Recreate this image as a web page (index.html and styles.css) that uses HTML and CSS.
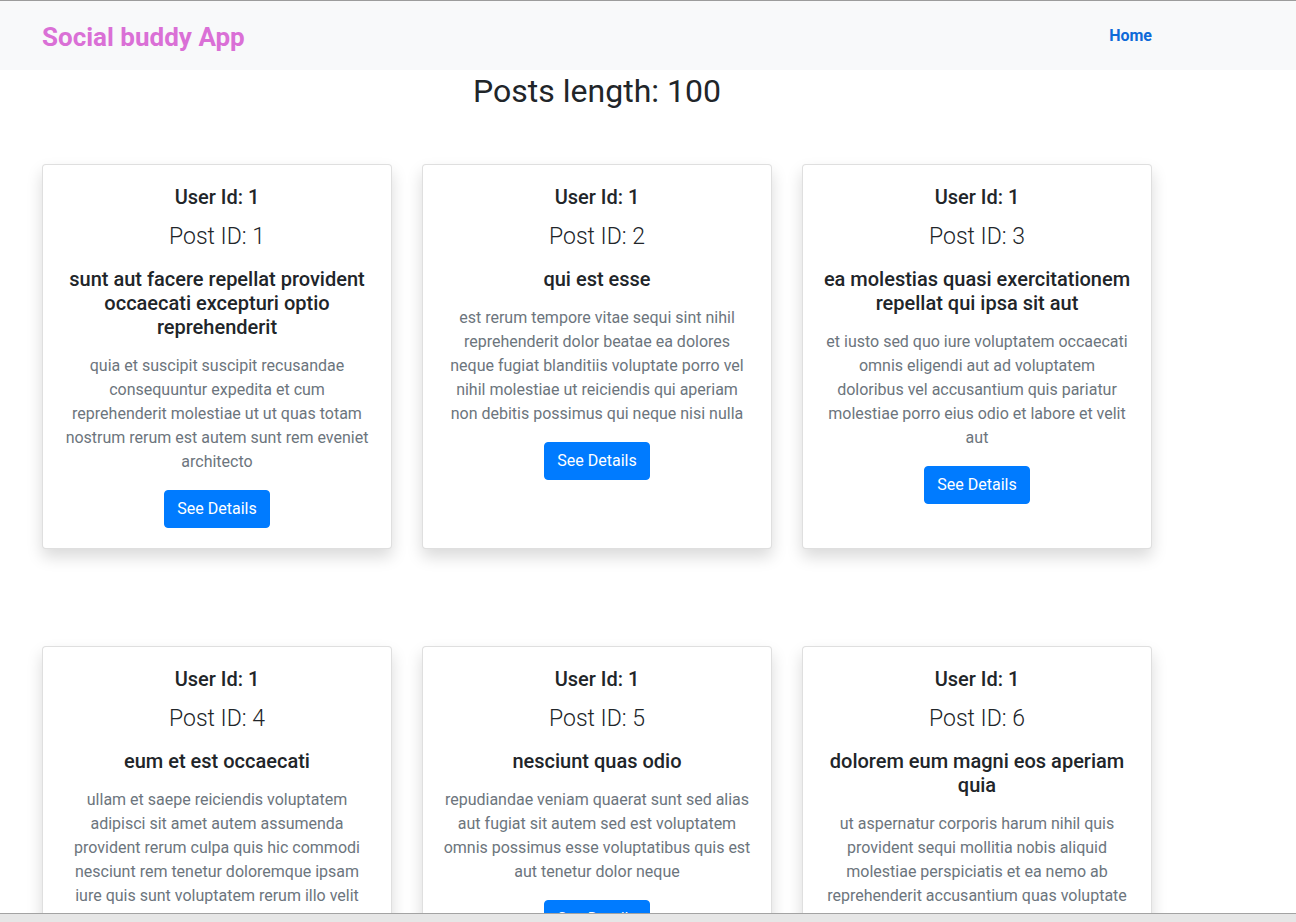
FILE: index.html
```html
<!DOCTYPE html>
<html lang="en">
<head>
<meta charset="utf-8">
<title>Social buddy App</title>
<link rel="stylesheet" href="styles.css">
</head>
<body>
<div class="top-edge"></div>
<nav class="navbar">
  <div class="container nav-inner">
    <a class="brand" href="#">Social buddy App</a>
    <a class="nav-link" href="#">Home</a>
  </div>
</nav>
<main class="container">
  <h2 class="page-title">Posts length: 100</h2>
  <div class="post-grid">
    <div class="card">
      <h5 class="user-id">User Id: 1</h5>
      <h4 class="post-id">Post ID: 1</h4>
      <h5 class="post-title">sunt aut facere repellat provident occaecati excepturi optio reprehenderit</h5>
      <p class="post-body">quia et suscipit suscipit recusandae consequuntur expedita et cum reprehenderit molestiae ut ut quas totam nostrum rerum est autem sunt rem eveniet architecto</p>
      <button class="btn">See Details</button>
    </div>
    <div class="card">
      <h5 class="user-id">User Id: 1</h5>
      <h4 class="post-id">Post ID: 2</h4>
      <h5 class="post-title">qui est esse</h5>
      <p class="post-body">est rerum tempore vitae sequi sint nihil reprehenderit dolor beatae ea dolores neque fugiat blanditiis voluptate porro vel nihil molestiae ut reiciendis qui aperiam non debitis possimus qui neque nisi nulla</p>
      <button class="btn">See Details</button>
    </div>
    <div class="card">
      <h5 class="user-id">User Id: 1</h5>
      <h4 class="post-id">Post ID: 3</h4>
      <h5 class="post-title">ea molestias quasi exercitationem repellat qui ipsa sit aut</h5>
      <p class="post-body">et iusto sed quo iure voluptatem occaecati omnis eligendi aut ad voluptatem doloribus&nbsp;vel accusantium quis pariatur molestiae porro eius odio et labore et velit aut</p>
      <button class="btn">See Details</button>
    </div>
    <div class="card">
      <h5 class="user-id">User Id: 1</h5>
      <h4 class="post-id">Post ID: 4</h4>
      <h5 class="post-title">eum et est occaecati</h5>
      <p class="post-body">ullam et saepe reiciendis voluptatem adipisci sit amet autem assumenda provident rerum culpa quis hic commodi nesciunt rem tenetur doloremque ipsam iure quis sunt voluptatem rerum illo velit</p>
      <button class="btn">See Details</button>
    </div>
    <div class="card">
      <h5 class="user-id">User Id: 1</h5>
      <h4 class="post-id">Post ID: 5</h4>
      <h5 class="post-title">nesciunt quas odio</h5>
      <p class="post-body">repudiandae veniam quaerat sunt sed alias aut fugiat sit autem sed est voluptatem omnis possimus esse voluptatibus quis est aut tenetur dolor neque</p>
      <button class="btn">See Details</button>
    </div>
    <div class="card">
      <h5 class="user-id">User Id: 1</h5>
      <h4 class="post-id">Post ID: 6</h4>
      <h5 class="post-title">dolorem eum magni eos aperiam quia</h5>
      <p class="post-body">ut aspernatur corporis harum nihil quis provident sequi mollitia nobis aliquid molestiae perspiciatis et ea nemo ab reprehenderit accusantium quas voluptate dolores velit et doloremque molestiae</p>
      <button class="btn">See Details</button>
    </div>
  </div>
</main>
<div class="bottom-bar"></div>
</body>
</html>
```
FILE: styles.css
```css
html {
  scrollbar-width: none;
}
html::-webkit-scrollbar {
  display: none;
}
body {
  margin: 0;
  font-family: Roboto, "Liberation Sans", sans-serif;
  font-size: 16px;
  line-height: 24px;
  color: #212529;
  background: #fff;
}
.top-edge {
  height: 1px;
  background: #9c9c9c;
}
.container {
  width: 1140px;
  box-sizing: border-box;
  margin-left: 27px;
  padding: 0 15px;
}
.navbar {
  background: #f8f9fa;
  height: 69px;
  display: flex;
  align-items: center;
}
.nav-inner {
  display: flex;
  justify-content: space-between;
  align-items: center;
}
.brand {
  font-size: 26px;
  font-weight: 700;
  color: #da70d6;
  text-decoration: none;
  line-height: 32px;
  padding-top: 2px;
}
.nav-link {
  font-size: 16px;
  font-weight: 700;
  color: #0d6ad8;
  text-decoration: none;
  padding-top: 1px;
}
.page-title {
  margin: 2px 0 0;
  text-align: center;
  font-size: 32px;
  font-weight: 400;
  line-height: 38px;
}
.post-grid {
  margin-top: 54px;
  display: grid;
  grid-template-columns: repeat(3, 350px);
  column-gap: 30px;
  row-gap: 97px;
  padding-bottom: 60px;
}
.card {
  background: #fff;
  border: 1px solid rgba(0, 0, 0, 0.125);
  border-radius: 4px;
  box-shadow: 0 8px 16px rgba(0, 0, 0, 0.15);
  padding: 20px;
  text-align: center;
  display: flex;
  flex-direction: column;
  align-items: center;
}
.user-id {
  margin: 0 0 12px;
  font-size: 20px;
  font-weight: 500;
  line-height: 24px;
}
.post-id {
  margin: 0 0 16px;
  font-size: 23px;
  font-weight: 300;
  line-height: 29px;
  padding-top: 1px;
}
.post-title {
  margin: 0 0 15px;
  font-size: 20px;
  font-weight: 500;
  line-height: 24px;
}
.post-body {
  margin: 0 0 16px;
  color: #6c757d;
}
.btn {
  font-family: inherit;
  font-size: 16px;
  line-height: 24px;
  padding: 6px 12px;
  border: 1px solid #007bff;
  border-radius: 4px;
  background: #007bff;
  color: #fff;
  cursor: pointer;
}
.bottom-bar {
  position: fixed;
  left: 0;
  right: 0;
  bottom: 0;
  height: 8px;
  border-top: 1px solid #a3a3a3;
  background: #e6e6e6;
}
```
